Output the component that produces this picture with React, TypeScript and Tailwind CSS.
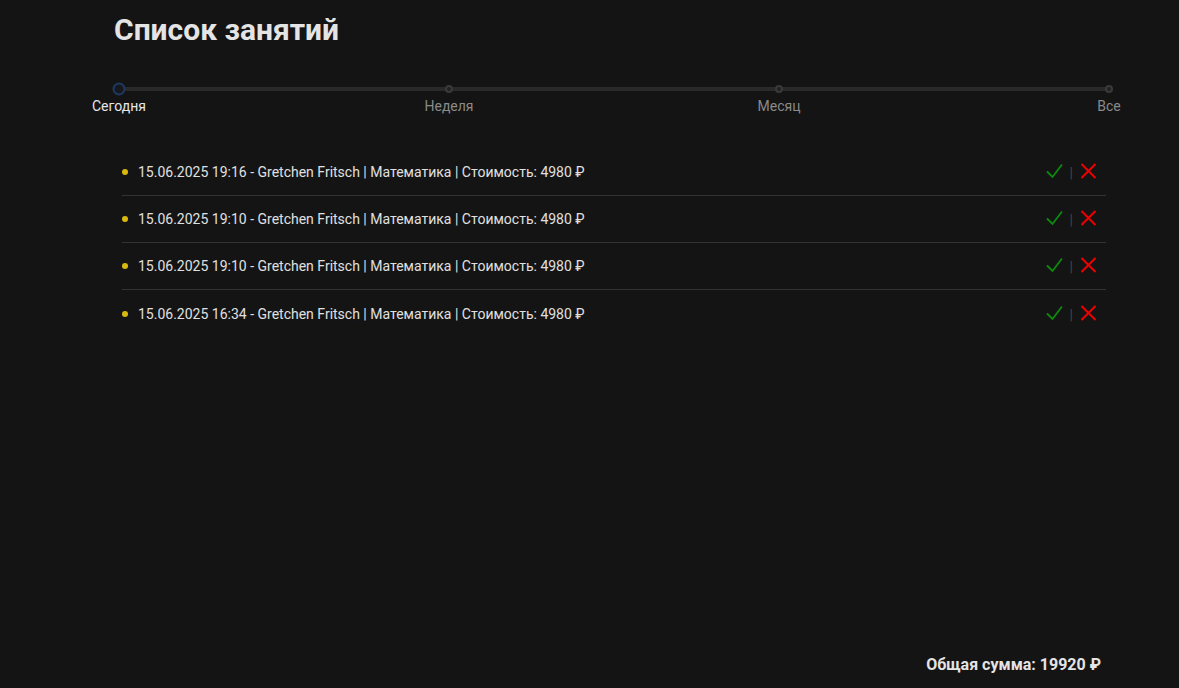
import React from 'react';

interface Lesson {
  date: string;
  student: string;
  subject: string;
  price: number;
}

const lessons: Lesson[] = [
  { date: '15.06.2025 19:16', student: 'Gretchen Fritsch', subject: 'Математика', price: 4980 },
  { date: '15.06.2025 19:10', student: 'Gretchen Fritsch', subject: 'Математика', price: 4980 },
  { date: '15.06.2025 19:10', student: 'Gretchen Fritsch', subject: 'Математика', price: 4980 },
  { date: '15.06.2025 16:34', student: 'Gretchen Fritsch', subject: 'Математика', price: 4980 },
];

const periods = ['Сегодня', 'Неделя', 'Месяц', 'Все'];
const positions = ['left-0', 'left-1/3', 'left-2/3', 'left-full'];

const CheckIcon = () => (
  <svg width="17" height="16" viewBox="0 0 17 16" fill="none">
    <path d="M1 8.5 L6.5 14 L16 1.5" stroke="#0c8c0c" strokeWidth="1.8" />
  </svg>
);

const CrossIcon = () => (
  <svg width="15" height="16" viewBox="0 0 15 16" fill="none">
    <path d="M0.5 1 L14.5 15 M14.5 1 L0.5 15" stroke="#ee0000" strokeWidth="2" />
  </svg>
);

const App: React.FC = () => {
  const total = lessons.reduce((sum, l) => sum + l.price, 0);

  return (
    <div className="h-[688px] flex flex-col bg-[#141414] text-[#e0e0e0] font-['Roboto',sans-serif] overflow-hidden">
      <h1 className="pl-[114px] pt-[12px] text-[30px] leading-[36px] font-bold text-[#e4e4e4]">Список занятий</h1>

      <div className="relative ml-[119px] w-[990px] mt-[35px] h-[54px]">
        <div className="absolute top-[4px] left-0 right-0 h-[4px] bg-[#2a2a2a] rounded-full" />
        {positions.map((pos, i) => (
          <div key={pos} className={`absolute top-[6px] ${pos} -translate-x-1/2 -translate-y-1/2`}>
            {i === 0 ? (
              <div className="w-[13px] h-[13px] rounded-full border-2 border-[#1e3a62] bg-[#16181d]" />
            ) : (
              <div className="w-[8px] h-[8px] rounded-full border-2 border-[#3a3a3a] bg-[#222]" />
            )}
          </div>
        ))}
        {periods.map((p, i) => (
          <span
            key={p}
            className={`absolute top-[13px] ${positions[i]} -translate-x-1/2 text-sm leading-5 whitespace-nowrap ${i === 0 ? 'text-[#e6e6e6]' : 'text-[#8a8a8a]'}`}
          >
            {p}
          </span>
        ))}
      </div>

      <ul className="ml-[122px] w-[984px] mt-[12px]">
        {lessons.map((l, i) => (
          <li
            key={i}
            className={`flex items-center py-[13px] h-[47px] ${i < lessons.length - 1 ? 'border-b border-[#333]' : ''}`}
          >
            <span className="w-[6px] h-[6px] rounded-full bg-[#d9b90e] mr-[10px]" />
            <span className="text-sm leading-5 text-[#e0e0e0]">
              {l.date} - {l.student} | {l.subject} | Стоимость: {l.price} ₽
            </span>
            <div className="ml-auto mr-[10px] flex items-center -mt-[2px]">
              <CheckIcon />
              <span className="ml-[7px] mr-[8px] text-[#444] text-sm leading-5 mt-[4px]">|</span>
              <CrossIcon />
            </div>
          </li>
        ))}
      </ul>

      <div className="mt-auto pb-[11px] pr-[78px] text-right text-base leading-6 font-bold text-[#e4e4e4]">
        Общая сумма: {total} ₽
      </div>
    </div>
  );
};

export default App;
